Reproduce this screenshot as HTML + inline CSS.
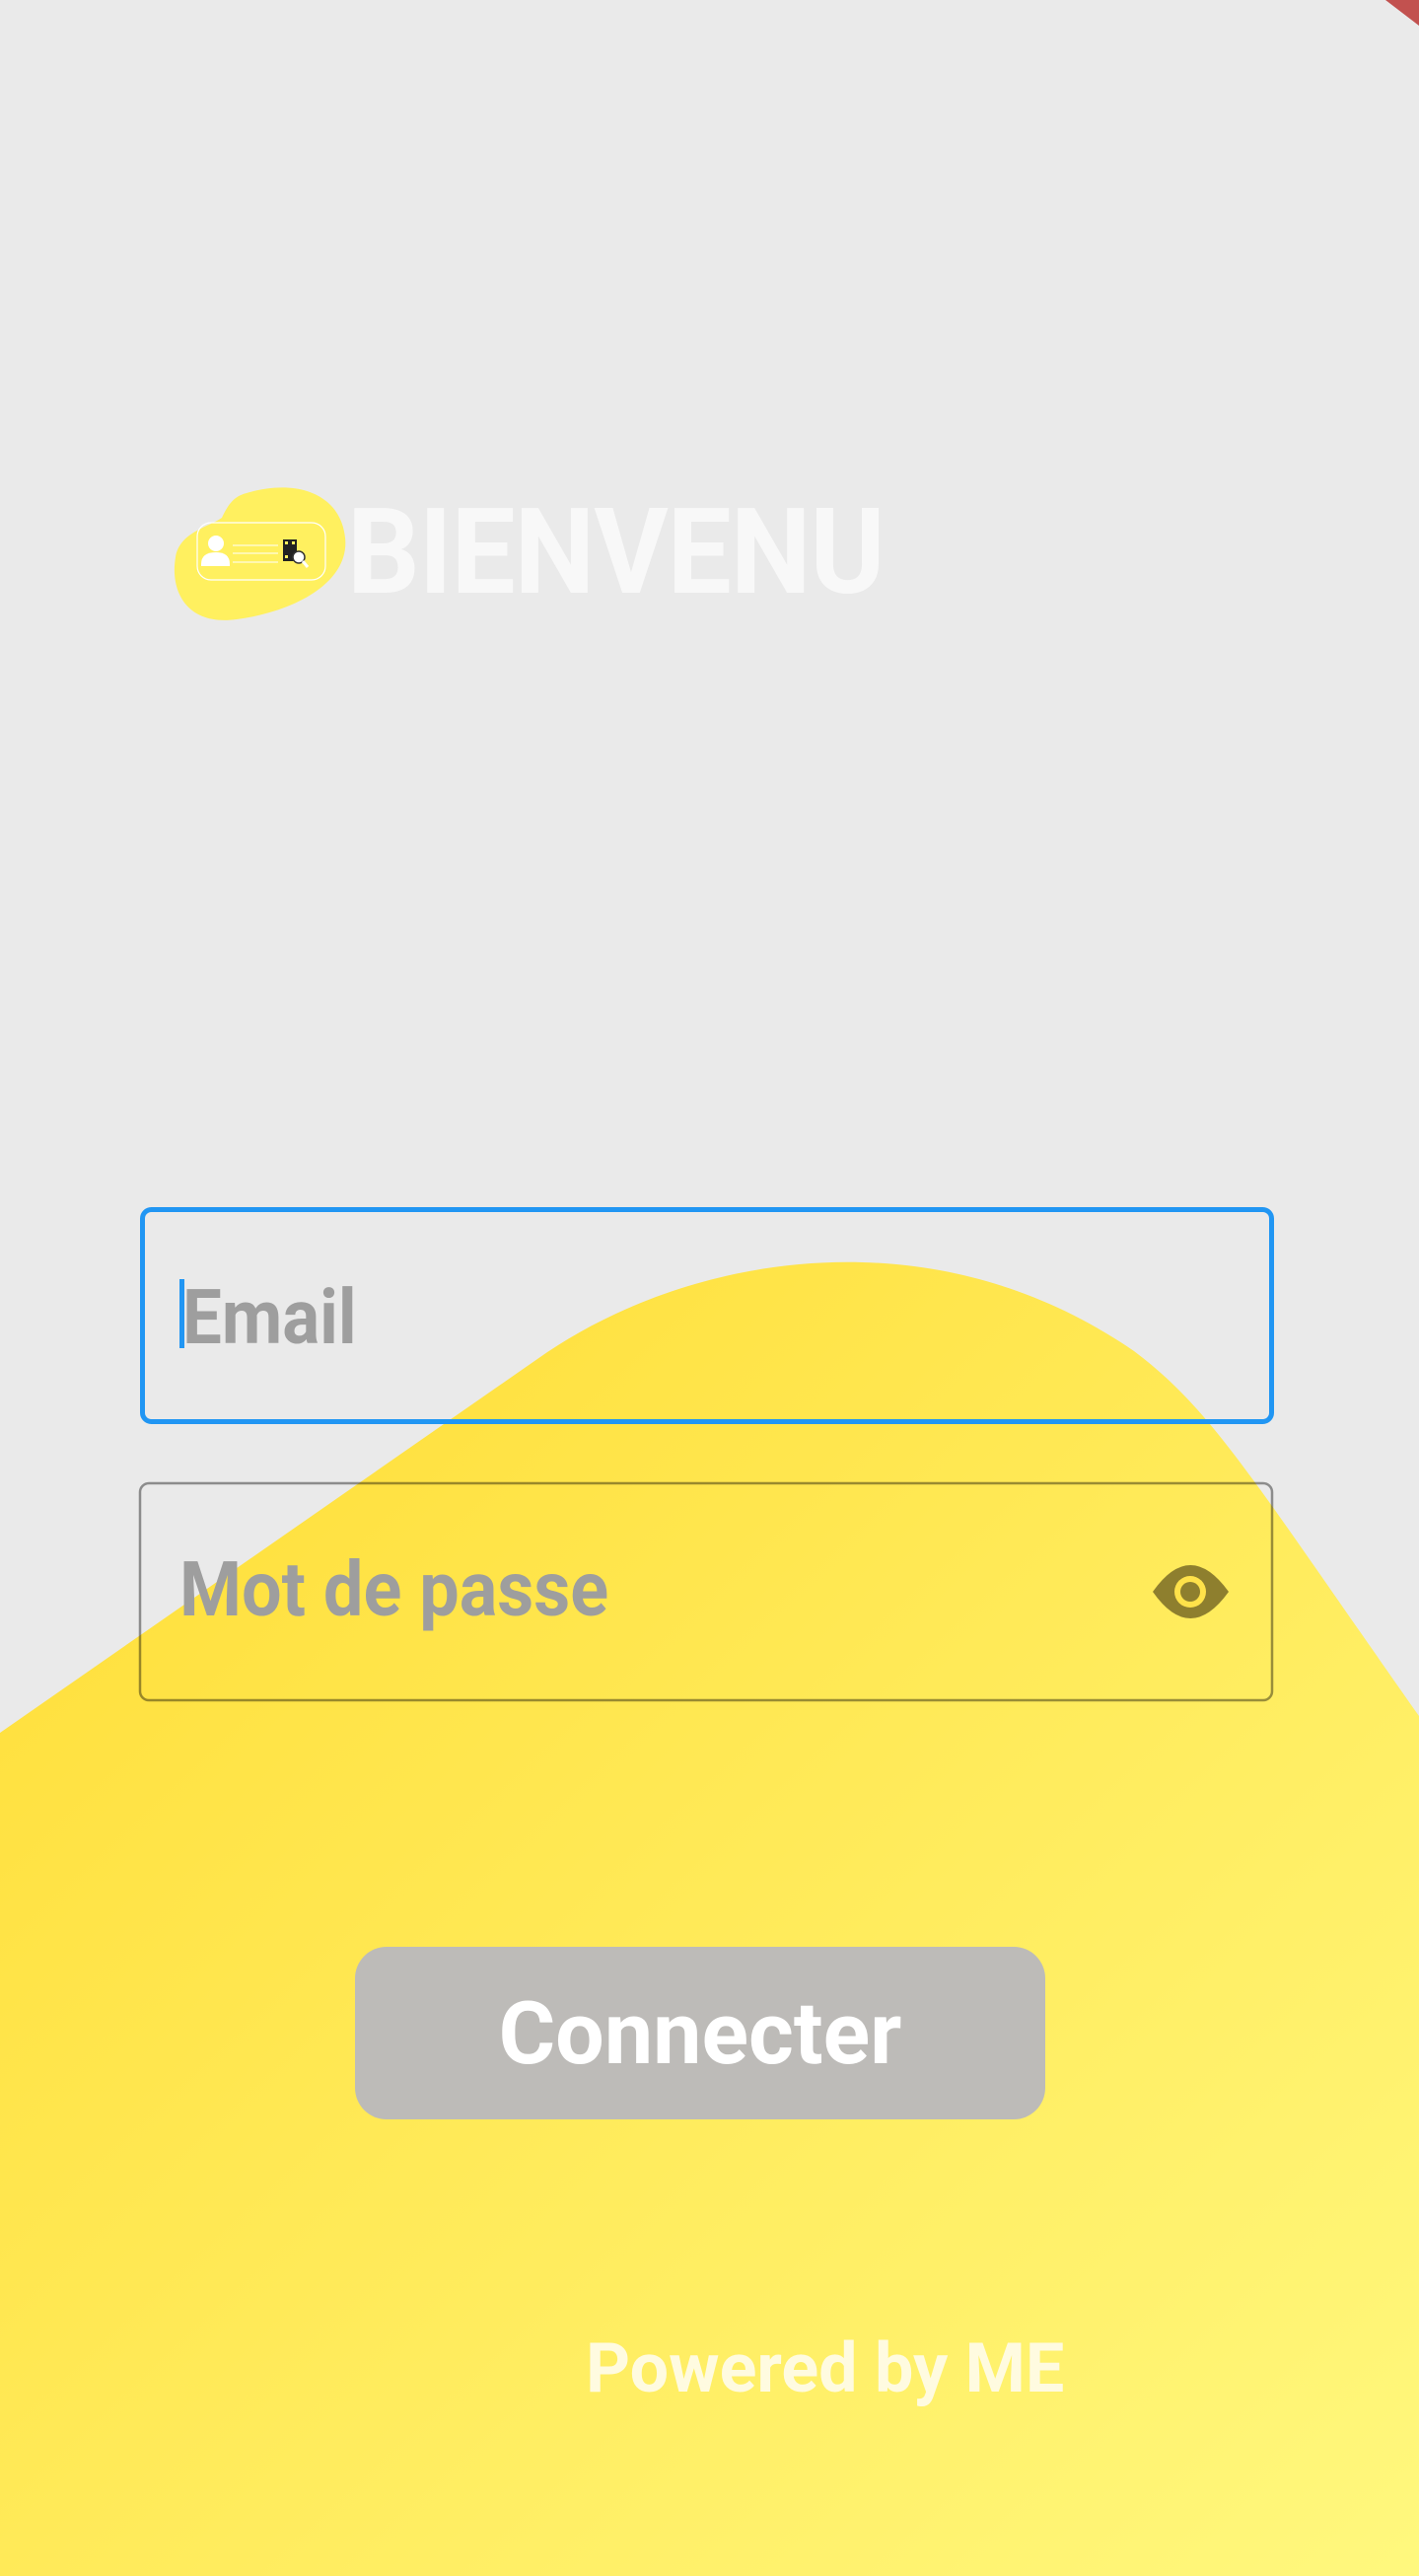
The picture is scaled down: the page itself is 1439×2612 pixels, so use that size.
<!DOCTYPE html>
<html><head><meta charset="utf-8"><style>
html,body{margin:0;padding:0}
body{width:1439px;height:2612px;position:relative;overflow:hidden;background:#eaeaea;font-family:"Roboto","Liberation Sans",sans-serif;font-weight:bold}
.abs{position:absolute}
.t{white-space:nowrap;line-height:1;transform-origin:0 0}
</style></head><body>
<svg class="abs" style="left:0;top:0" width="1439" height="2612" viewBox="0 0 1439 2612">
<defs><linearGradient id="g" x1="0" y1="0" x2="1" y2="1">
<stop offset="0" stop-color="#ffdc33"/><stop offset="1" stop-color="#fff87e"/></linearGradient></defs>
<path d="M0 1757 L545 1378 C690 1275 940 1225 1150 1370 C1230 1430 1270 1500 1439 1740 L1439 2612 L0 2612 Z" fill="url(#g)"/>
<path d="M1405 0 L1439 0 L1439 26 Z" fill="#c2514f"/>
<path d="M250 500 C300 485 345 500 350 545 C355 590 300 620 240 628 C190 635 172 600 178 565 C182 540 210 535 225 525 C232 510 238 503 250 500 Z" fill="#fff05f"/>
<rect x="200" y="530" width="130" height="58" rx="14" fill="none" stroke="#fff" stroke-width="1.2"/>
<circle cx="219" cy="551" r="8" fill="#fff"/>
<path d="M204 572 Q204 560 219 560 Q233 560 233 572 L233 574 L204 574 Z" fill="#fff"/>
<line x1="236" y1="553" x2="282" y2="553" stroke="#fff" stroke-width="1"/>
<line x1="236" y1="561" x2="282" y2="561" stroke="#fff" stroke-width="1"/>
<line x1="236" y1="570" x2="282" y2="570" stroke="#fff" stroke-width="1"/>
<rect x="287" y="547" width="14" height="22" fill="#222"/>
<rect x="289" y="549" width="3" height="3" fill="#fff05f"/><rect x="296" y="549" width="3" height="3" fill="#fff05f"/><rect x="289" y="563" width="3" height="3" fill="#fff05f"/>
<circle cx="303" cy="565" r="6" fill="#fff" stroke="#333" stroke-width="1.5"/>
<line x1="307" y1="569" x2="312" y2="575" stroke="#fff" stroke-width="3"/>
<rect x="144.5" y="1226.5" width="1145" height="215" rx="9" fill="none" stroke="#2196f3" stroke-width="5"/>
<rect x="182" y="1297" width="5" height="70" fill="#2196f3"/>
<rect x="142" y="1504" width="1148" height="220" rx="9" fill="none" stroke="rgba(0,0,0,0.4)" stroke-width="2.5"/>
<path d="M1169 1614 Q1207 1560 1246 1614 Q1207 1668 1169 1614 Z" fill="#8e7f2e"/>
<circle cx="1207" cy="1614" r="16" fill="#ffe24a"/>
<circle cx="1207" cy="1614" r="10" fill="#8e7f2e"/>
<rect x="360" y="1974" width="700" height="175" rx="32" fill="#bdbbb8"/>
</svg>
<div class="abs t" style="left:352px;top:500px;font-size:121px;letter-spacing:-1px;color:#f8f8f8;transform:scaleX(0.955)">BIENVENU</div>
<div class="abs t" style="left:185px;top:1298px;font-size:77px;color:#9e9e9e;transform:scaleX(0.92)">Email</div>
<div class="abs t" style="left:182px;top:1574px;font-size:77px;color:#9e9e9e;transform:scaleX(0.935)">Mot de passe</div>
<div class="abs t" style="left:360px;width:700px;top:2019px;text-align:center;font-size:88px;color:#fff">Connecter</div>
<div class="abs t" style="left:594px;top:2367px;font-size:70px;color:#fffbe0">Powered by ME</div>
</body></html>
